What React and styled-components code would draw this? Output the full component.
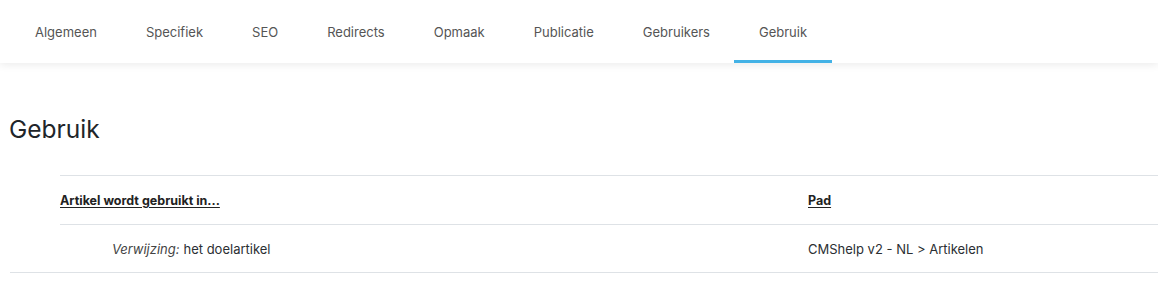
import React from "react";
import styled, { createGlobalStyle } from "styled-components";

const GlobalStyle = createGlobalStyle`
  body {
    margin: 0;
    background: #fff;
    font-family: Inter, "Noto Sans", sans-serif;
    color: #212529;
  }
`;

const TabBar = styled.nav`
  display: flex;
  height: 63px;
  padding-left: 10.5px;
  background: #fff;
  box-shadow: 0 2px 8px rgba(0, 0, 0, 0.08);
  position: relative;
  z-index: 1;
`;

const Tab = styled.div`
  display: flex;
  align-items: center;
  padding: 3px 24.5px 0;
  font-size: 13px;
  color: #555;
  border-bottom: 3px solid ${(p) => (p.$active ? "#43b2e6" : "transparent")};
  box-sizing: border-box;
`;

const Content = styled.main`
  padding: 51px 0 0 10px;
`;

const Title = styled.h2`
  margin: 0 0 0 -1px;
  font-size: 24.5px;
  font-weight: 400;
  color: #212529;
  line-height: 30px;
`;

const Table = styled.div`
  margin-top: 31px;
  display: grid;
  grid-template-columns: 50px 748px 1fr;
`;

const Cell = styled.div`
  display: flex;
  align-items: center;
  height: 49px;
  border-top: 1px solid ${(p) => (p.$noTop ? "transparent" : "#dee2e6")};
  border-bottom: ${(p) => (p.$bottom ? "1px solid #dee2e6" : "none")};
  padding-left: ${(p) => p.$indent || 0}px;
  font-size: 13px;
  color: #2b2f33;
  box-sizing: border-box;
`;

const HeadLink = styled.span`
  font-size: 12.5px;
  font-weight: 700;
  text-decoration: underline;
  text-underline-offset: 2px;
  color: #222;
`;

const Em = styled.em`
  color: #444;
  margin-right: 4px;
`;

export default function App() {
  const tabs = [
    "Algemeen",
    "Specifiek",
    "SEO",
    "Redirects",
    "Opmaak",
    "Publicatie",
    "Gebruikers",
    "Gebruik",
  ];
  return (
    <>
      <GlobalStyle />
      <TabBar>
        {tabs.map((t) => (
          <Tab key={t} $active={t === "Gebruik"}>
            {t}
          </Tab>
        ))}
      </TabBar>
      <Content>
        <Title>Gebruik</Title>
        <Table>
          <Cell $noTop />
          <Cell>
            <HeadLink>Artikel wordt gebruikt in...</HeadLink>
          </Cell>
          <Cell>
            <HeadLink>Pad</HeadLink>
          </Cell>
          <Cell $noTop $bottom />
          <Cell $indent={52} $bottom>
            <Em>Verwijzing:</Em> het doelartikel
          </Cell>
          <Cell $bottom>
            CMShelp v2 - NL &gt; Artikelen
          </Cell>
        </Table>
      </Content>
    </>
  );
}
